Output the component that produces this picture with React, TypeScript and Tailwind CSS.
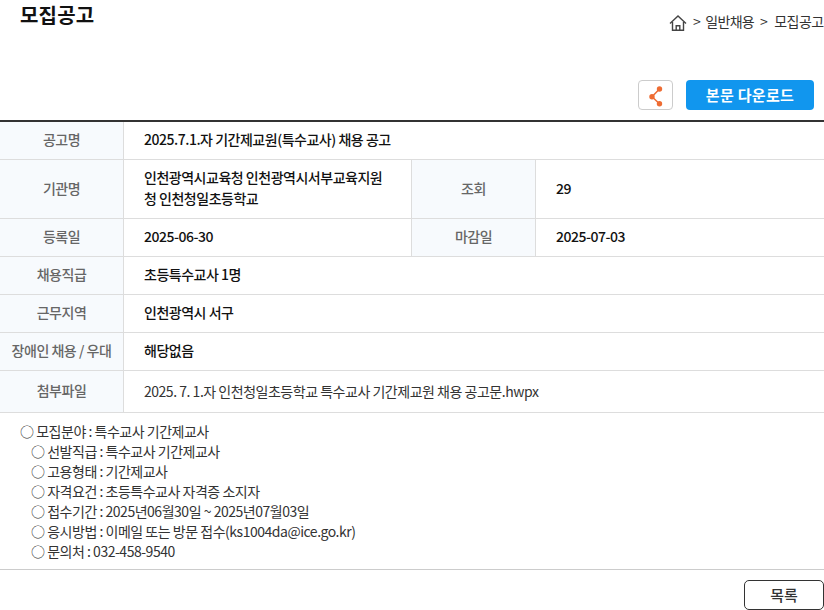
const Th = ({ children, className = "" }: { children: React.ReactNode; className?: string }) => (
  <div className={`flex items-center justify-center bg-[#f7fafd] pb-[2px] text-[14px] font-medium text-[#666] border-[#ddd] ${className}`}>{children}</div>
);
const Td = ({ children, className = "" }: { children: React.ReactNode; className?: string }) => (
  <div className={`flex items-center pl-5 pr-5 pb-[2px] text-[14px] font-medium text-[#111] leading-[21px] ${className}`}>{children}</div>
);
const Row = ({ h, children }: { h: string; children: React.ReactNode }) => (
  <div className={`flex border-b border-[#ddd] ${h}`}>{children}</div>
);

const lines = [
  "선발직급 : 특수교사 기간제교사",
  "고용형태 : 기간제교사",
  "자격요건 : 초등특수교사 자격증 소지자",
  "접수기간 : 2025년06월30일 ~ 2025년07월03일",
  "응시방법 : 이메일 또는 방문 접수(ks1004da@ice.go.kr)",
  "문의처 : 032-458-9540",
];

export default function App() {
  return (
    <div className="w-[824px] h-[610px] overflow-hidden bg-white font-['Noto_Sans_CJK_KR','Noto_Sans',sans-serif] tracking-[-0.48px]">
      <div className="flex h-[80px] items-start justify-between">
        <h1 className="pl-5 pt-px text-[20px] leading-[28px] font-bold text-[#111] tracking-[0.2px]">모집공고</h1>
        <div className="mt-[9px] flex w-[155px] shrink-0 items-center overflow-hidden whitespace-nowrap text-[14px] leading-[20px] text-[#333]">
          <svg width="18" height="18" viewBox="0 0 18 18" fill="none" stroke="#444" strokeWidth="1.4" className="mt-[5px] mr-[6px] shrink-0">
            <path d="M1 9.5 9 2l8 7.5" />
            <path d="M3.5 8v8.2h11V8" />
            <path d="M7.2 16.2v-4.4h3.6v4.4" />
          </svg>
          <span>&gt;</span>
          <span className="ml-[5px] tracking-[-0.7px]">일반채용</span>
          <span className="ml-[6px]">&gt;</span>
          <span className="ml-[7px] tracking-[-0.6px]">모집공고</span>
        </div>
      </div>
      <div className="flex h-[40px] items-start justify-end gap-[13px] pr-[10px]">
        <button className="flex h-[30px] w-[35px] items-center justify-center rounded-[4px] border border-[#ccc] bg-white">
          <svg width="14" height="24" viewBox="0 0 14 24" stroke="#ee6c33" strokeWidth="1.5" fill="#ee6c33">
            <path d="M10.5 6 3 13.7l7.5 7" fill="none" />
            <circle cx="10.5" cy="6" r="2.7" stroke="none" />
            <circle cx="3" cy="13.7" r="2.7" stroke="none" />
            <circle cx="10.5" cy="20.7" r="2.7" stroke="none" />
          </svg>
        </button>
        <button className="h-[30px] w-[128px] rounded-[4px] bg-[#1196ee] text-[15px] font-bold text-white tracking-[0.3px]">본문 다운로드</button>
      </div>

      <div className="border-t-2 border-[#333]">
        <Row h="h-[38px]">
          <Th className="w-[124px] border-r">공고명</Th>
          <Td className="flex-1">2025.7.1.자 기간제교원(특수교사) 채용 공고</Td>
        </Row>
        <Row h="h-[59px]">
          <Th className="w-[124px] border-r">기관명</Th>
          <Td className="w-[288px] border-r border-[#ddd]">인천광역시교육청 인천광역시서부교육지원청 인천청일초등학교</Td>
          <Th className="w-[124px] border-r">조회</Th>
          <Td className="flex-1">29</Td>
        </Row>
        <Row h="h-[38px]">
          <Th className="w-[124px] border-r">등록일</Th>
          <Td className="w-[288px] border-r border-[#ddd]">2025-06-30</Td>
          <Th className="w-[124px] border-r">마감일</Th>
          <Td className="flex-1">2025-07-03</Td>
        </Row>
        <Row h="h-[38px]">
          <Th className="w-[124px] border-r">채용직급</Th>
          <Td className="flex-1">초등특수교사 1명</Td>
        </Row>
        <Row h="h-[38px]">
          <Th className="w-[124px] border-r">근무지역</Th>
          <Td className="flex-1">인천광역시 서구</Td>
        </Row>
        <Row h="h-[38px]">
          <Th className="w-[124px] border-r whitespace-nowrap">장애인 채용 / 우대</Th>
          <Td className="flex-1">해당없음</Td>
        </Row>
        <Row h="h-[42px]">
          <Th className="w-[124px] border-r">첨부파일</Th>
          <Td className="flex-1 pt-[2px] font-normal text-[#333]">2025. 7. 1.자 인천청일초등학교 특수교사 기간제교원 채용 공고문.hwpx</Td>
        </Row>
      </div>

      <div className="h-[157px] border-b border-[#ccc] pt-[8px] pl-5 text-[14px] leading-[20px] text-[#333]">
        <p>○ 모집분야 : 특수교사 기간제교사</p>
        {lines.map((l) => (
          <p key={l} className="pl-[11px]">○ {l}</p>
        ))}
      </div>

      <div className="flex justify-end pt-[10px]">
        <button className="h-[30px] w-[80px] rounded-[5px] border border-[#333] bg-white text-[15px] font-medium text-[#333] tracking-normal">목록</button>
      </div>
    </div>
  );
}
